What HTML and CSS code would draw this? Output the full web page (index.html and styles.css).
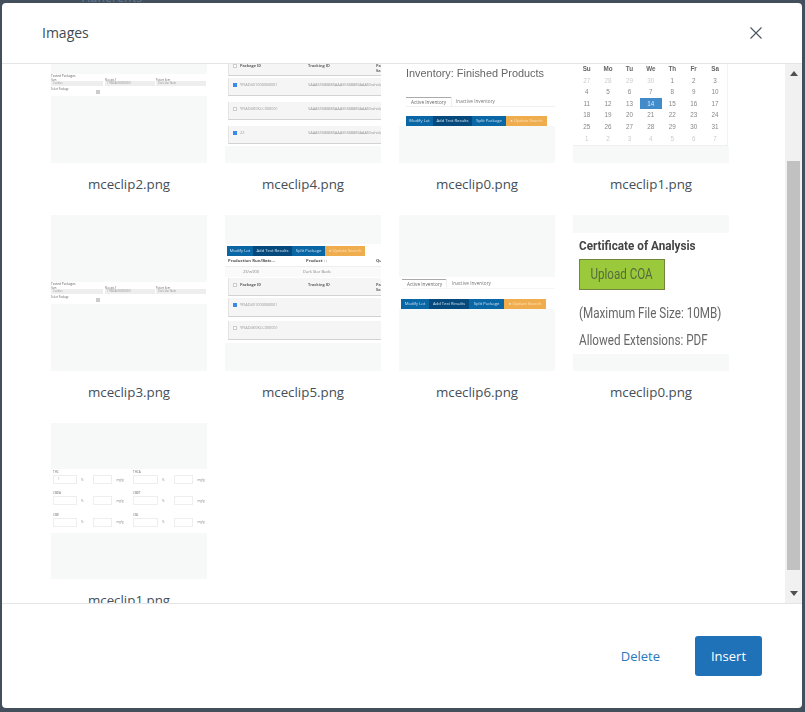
FILE: index.html
```html
<!DOCTYPE html>
<html lang="en">
<head>
<meta charset="utf-8">
<title>Images</title>
<link rel="stylesheet" href="styles.css">
</head>
<body>
<div class="backdrop-text">Adherents</div>
<div class="modal">
  <header class="head">
    <h1 class="title">Images</h1>
    <button class="close" aria-label="Close">
      <svg width="14" height="14" viewBox="0 0 14 14"><path d="M1.5 1.5 12.5 12.5M12.5 1.5 1.5 12.5" fill="none" stroke="#4a5560" stroke-width="1.1"/></svg>
    </button>
  </header>
  <div class="body">
    <div class="scroller">
      <div class="grid">

        <figure class="item">
          <div class="thumb">
            <div class="fill h67"></div>
            <div class="band form-band">
              <div class="mini-title">Tested Packages</div>
              <div class="form-row">
                <div><span>Item</span><i>Cookies</i></div>
                <div><span>Receipt #</span><i>1YFADA0000000001</i></div>
                <div><span>Potent Item</span><i>Dark Star Buds</i></div>
              </div>
              <div class="form-select"><span>Select Package</span><i><b></b></i></div>
            </div>
            <div class="fill grow"></div>
          </div>
          <figcaption>mceclip2.png</figcaption>
        </figure>

        <figure class="item">
          <div class="thumb white">
            <div class="cards cards-top">
              <div class="card head-card"><u></u><b>Package ID</b><b>Tracking ID</b><b class="last">Pa<br>Sa</b></div>
              <div class="card"><u class="on"></u><span>YFIAD4010000B0001</span><span class="long">5AAAS5S8888SAAAS5S8888SAAAS5whisky</span></div>
              <div class="card"><u></u><span>YFIAD4K0KCC000001</span><span class="long">5AAAS5S8888SAAAS5S8888SAAAS5whisky</span></div>
              <div class="card"><u class="on"></u><span>22</span><span class="long">5AAAS5S8888SAAAS5S8888SAAAS5whisky</span></div>
            </div>
            <div class="fill grow"></div>
          </div>
          <figcaption>mceclip4.png</figcaption>
        </figure>

        <figure class="item">
          <div class="thumb white">
            <div class="spacer59"></div>
            <div class="inv-title">Inventory: Finished Products</div>
            <div class="tabs tabs-a"><span class="active">Active Inventory</span><span>Inactive Inventory</span></div>
            <div class="btns btns-a"><span class="b1">Modify Lot</span><span class="b2">Add Test Results</span><span class="b1">Split Package</span><span class="b3">&#9679; Update Search</span></div>
            <div class="fill grow"></div>
          </div>
          <figcaption>mceclip0.png</figcaption>
        </figure>

        <figure class="item">
          <div class="thumb white">
            <div class="spacer56"></div>
            <div class="cal">
              <b>Su</b><b>Mo</b><b>Tu</b><b>We</b><b>Th</b><b>Fr</b><b>Sa</b>
              <s>27</s><s>28</s><s>29</s><s>30</s><span>1</span><span>2</span><span>3</span>
              <span>4</span><span>5</span><span>6</span><span>7</span><span>8</span><span>9</span><span>10</span>
              <span>11</span><span>12</span><span>13</span><em>14</em><span>15</span><span>16</span><span>17</span>
              <span>18</span><span>19</span><span>20</span><span>21</span><span>22</span><span>23</span><span>24</span>
              <span>25</span><span>26</span><span>27</span><span>28</span><span>29</span><span>30</span><span>31</span>
              <s>1</s><s>2</s><s>3</s><s>4</s><s>5</s><s>6</s><s>7</s>
            </div>
            <div class="fill grow"></div>
          </div>
          <figcaption>mceclip1.png</figcaption>
        </figure>

        <figure class="item">
          <div class="thumb">
            <div class="fill h67"></div>
            <div class="band form-band">
              <div class="mini-title">Tested Packages</div>
              <div class="form-row">
                <div><span>Item</span><i>Cookies</i></div>
                <div><span>Receipt #</span><i>1YFADA0000000001</i></div>
                <div><span>Potent Item</span><i>Dark Star Buds</i></div>
              </div>
              <div class="form-select"><span>Select Package</span><i><b></b></i></div>
            </div>
            <div class="fill grow"></div>
          </div>
          <figcaption>mceclip3.png</figcaption>
        </figure>

        <figure class="item">
          <div class="thumb white">
            <div class="fill h29"></div>
            <div class="btns btns-e"><span class="b1">Modify Lot</span><span class="b2">Add Test Results</span><span class="b1">Split Package</span><span class="b3">&#9679; Update Search</span></div>
            <div class="prod-head"><b>Production Run/Batc...</b><b>Product ↑↓</b><b>Qu</b></div>
            <div class="prod-row"><span>23/w900</span><span>Dark Star Buds</span></div>
            <div class="cards cards-low">
              <div class="card head-card"><u></u><b>Package ID</b><b>Tracking ID</b><b class="last">Pa<br>Sa</b></div>
              <div class="card"><u class="on"></u><span>YFIAD4010000B0001</span></div>
              <div class="card"><u></u><span>YFIAD4K0KCC000001</span></div>
            </div>
            <div class="fill grow"></div>
          </div>
          <figcaption>mceclip5.png</figcaption>
        </figure>

        <figure class="item">
          <div class="thumb">
            <div class="fill h62"></div>
            <div class="band inv-band">
              <div class="tabs tabs-b"><span class="active">Active Inventory</span><span>Inactive Inventory</span></div>
              <div class="btns btns-b"><span class="b1">Modify Lot</span><span class="b2">Add Test Results</span><span class="b1">Split Package</span><span class="b3">&#9679; Update Search</span></div>
            </div>
            <div class="fill grow"></div>
          </div>
          <figcaption>mceclip6.png</figcaption>
        </figure>

        <figure class="item">
          <div class="thumb">
            <div class="fill h18"></div>
            <div class="band coa">
              <div class="coa-title">Certificate of Analysis</div>
              <div class="coa-btn"><span>Upload COA</span></div>
              <div class="coa-line first">(Maximum File Size: 10MB)</div>
              <div class="coa-line">Allowed Extensions: PDF</div>
            </div>
            <div class="fill grow"></div>
          </div>
          <figcaption>mceclip0.png</figcaption>
        </figure>

        <figure class="item">
          <div class="thumb">
            <div class="fill h46"></div>
            <div class="band test-band">
              <div class="test-grid">
                <div><label>THC</label><p><i class="w24">1</i><span>%</span><i class="w19"></i><span>mg/g</span></p></div>
                <div><label>THCA</label><p><i class="w25"></i><span>%</span><i class="w19"></i><span>mg/g</span></p></div>
                <div><label>CBDA</label><p><i class="w24"></i><span>%</span><i class="w19"></i><span>mg/g</span></p></div>
                <div><label>CBDT</label><p><i class="w25"></i><span>%</span><i class="w19"></i><span>mg/g</span></p></div>
                <div><label>CBD</label><p><i class="w24"></i><span>%</span><i class="w19"></i><span>mg/g</span></p></div>
                <div><label>CBL</label><p><i class="w25"></i><span>%</span><i class="w19"></i><span>mg/g</span></p></div>
              </div>
            </div>
            <div class="fill grow"></div>
          </div>
          <figcaption>mceclip1.png</figcaption>
        </figure>

      </div>
    </div>
    <div class="scrollbar">
      <svg class="arrow" width="8" height="5" viewBox="0 0 8 5"><path d="M4 0 8 5H0Z" fill="#505050"/></svg>
      <div class="track"><div class="bar"></div></div>
      <svg class="arrow" width="8" height="5" viewBox="0 0 8 5"><path d="M0 0H8L4 5Z" fill="#505050"/></svg>
    </div>
  </div>
  <footer class="foot">
    <button class="link">Delete</button>
    <button class="primary">Insert</button>
  </footer>
</div>
</body>
</html>
```
FILE: styles.css
```css
* { box-sizing: border-box; }
html, body { height: 100%; }
body {
  margin: 0;
  padding: 3px 3px 4px 2px;
  background: #434f5a;
  overflow: hidden;
  font-family: "Open Sans", sans-serif;
  position: relative;
}
.backdrop-text {
  position: absolute;
  left: 82px;
  top: -9px;
  font-size: 12px;
  font-weight: 600;
  line-height: 14px;
  color: #58728c;
}
.modal {
  position: relative;
  height: 705px;
  background: #fff;
  border-radius: 4px;
  display: flex;
  flex-direction: column;
  overflow: hidden;
}
.head {
  height: 61px;
  flex: none;
  border-bottom: 1px solid #e3e5e6;
  display: flex;
  align-items: center;
  justify-content: space-between;
  padding: 0 39px 0 40px;
}
.title {
  margin: 0 0 2px;
  font-size: 14px;
  font-weight: 400;
  color: #3f4a54;
}
.close {
  border: 0;
  background: none;
  padding: 0;
  width: 14px;
  height: 14px;
  display: block;
}
.close svg { display: block; }
.body {
  flex: 1;
  min-height: 0;
  display: flex;
}
.scroller {
  flex: 1;
  overflow: hidden;
}
.grid {
  margin-top: -57px;
  padding-left: 49px;
  display: grid;
  grid-template-columns: repeat(4, 156px);
  grid-auto-rows: 208px;
  column-gap: 18px;
  align-content: start;
}
.item { margin: 0; }
figcaption {
  margin-top: 12px;
  text-align: center;
  font-size: 13.33px;
  line-height: 19px;
  color: #444f59;
}
.thumb {
  width: 156px;
  height: 156px;
  background: #f7f8f8;
  overflow: hidden;
  display: flex;
  flex-direction: column;
  color: #777;
  filter: blur(.4px);
}
.thumb.white { background: #fff; }
.fill { background: #f7f8f8; flex: none; }
.fill.grow { flex: 1; }
.h18 { height: 18px; }
.h29 { height: 29px; }
.h46 { height: 46px; }
.h62 { height: 62px; }
.h67 { height: 67px; }
.spacer56 { height: 56px; flex: none; }
.spacer59 { height: 59px; flex: none; }
.band { background: #fff; flex: none; }

/* tested-packages form */
.form-band { height: 22px; font-size: 2.6px; line-height: 2.5px; }
.mini-title { font-size: 3.2px; line-height: 4px; height: 4.5px; color: #666; }
.form-row { display: grid; grid-template-columns: 54px 51px 50px; }
.form-row span, .form-select span { display: block; height: 2.5px; color: #666; }
.form-row i {
  display: block;
  height: 5px;
  width: 50px;
  background: #eee;
  font-style: normal;
  padding-left: 2px;
  line-height: 5px;
  color: #999;
}
.form-row div:first-child i { width: 52px; }
.form-select { margin-top: 1.5px; }
.form-select i { display: flex; justify-content: flex-end; width: 49px; height: 5px; }
.form-select b { width: 4px; height: 4px; background: #ccc; display: block; }

/* package cards */
.cards { padding-left: 3px; flex: none; display: flex; flex-direction: column; }
.cards-top { height: 139px; padding-top: 52px; gap: 6px; }
.cards-top .head-card { height: 17px; margin-bottom: -4px; }
.cards-low { height: 65px; margin-top: 1px; gap: 4px; }
.cards-low .card { height: 19px; }
.cards-low .head-card { height: 18px; margin-bottom: -2px; }
.card {
  width: 156px;
  height: 18px;
  flex: none;
  background: #f5f5f5;
  border-bottom: 1px solid #d2d2d2;
  border-left: 1px solid #e3e3e3;
  display: flex;
  align-items: flex-start;
  font-size: 3.9px;
  line-height: 5px;
  color: #999;
  padding-top: 3.5px;
  overflow: hidden;
  white-space: nowrap;
}
.card u {
  width: 4px;
  height: 4px;
  margin: 1px 0 0 4px;
  border: .5px solid #ccc;
  background: #fff;
  flex: none;
}
.card u.on { background: #3b8ae6; border-color: #3b8ae6; }
.card span, .card b { display: block; width: 71px; padding-left: 3px; flex: none; }
.card b { color: #666; }
.card b + b { width: 68px; padding-left: 0; }
.card span.long { width: 80px; padding-left: 0; font-size: 3.95px; letter-spacing: -.05px; }
.card b.last { width: 10px; }

/* inventory */
.inv-title {
  font-family: "Liberation Sans", sans-serif;
  font-size: 10.9px;
  line-height: 14px;
  height: 31px;
  padding-left: 7px;
  white-space: nowrap;
  color: #666;
  flex: none;
}
.tabs {
  display: flex;
  font-size: 4.7px;
  line-height: 9px;
  height: 10px;
  color: #777;
  flex: none;
}
.tabs span { padding: 0 5px; white-space: nowrap; }
.tabs .active { border-top: 1px solid #aaa; box-shadow: 1px 0 0 #eee; line-height: 9px; color: #666; }
.tabs-a { margin-left: 7px; border-bottom: 1px solid #f0f0f0; margin-bottom: 9px; }
.tabs-b { margin: 2px 0 10px 3px; border-bottom: 1px solid #f6f6f6; }
.tabs-b .active { padding: 0 4px 0 5px; }
.tabs-b span + span { padding-left: 6px; }
.btns {
  display: grid;
  height: 10px;
  flex: none;
  font-size: 4.2px;
  line-height: 10px;
  color: #cfe0ee;
  white-space: nowrap;
  text-align: center;
}
.btns span { overflow: hidden; }
.btns .b1 { background: #0a67a6; }
.btns .b2 { background: #064a7d; }
.btns .b3 { background: #f0ad4e; color: #fbe3bd; }
.btns-a { margin-left: 7px; grid-template-columns: 27px 39px 34px 41px; }
.btns-b { margin-left: 2px; grid-template-columns: 28px 40px 35px 42px; }
.btns-e { margin: 2px 0 0 2px; grid-template-columns: 26px 39px 33px 40px; }

/* production header */
.prod-head, .prod-row {
  display: grid;
  padding-left: 3px;
  white-space: nowrap;
  flex: none;
  overflow: hidden;
}
.prod-head { grid-template-columns: 78px 70px 10px; font-size: 4.2px; line-height: 10px; height: 11px; color: #555; border-bottom: 1px solid #eee; }
.prod-row { grid-template-columns: 75px 60px; font-size: 4px; line-height: 9px; height: 10px; color: #888; background: #fafafa; }
.prod-row span:first-child { padding-left: 15px; }

/* calendar */
.cal {
  width: 155px;
  height: 83px;
  flex: none;
  display: grid;
  grid-template-columns: repeat(7, 21.4px);
  grid-auto-rows: 11.6px;
  padding-left: 3px;
  font-family: "Liberation Sans", sans-serif;
  font-size: 6.3px;
  line-height: 11.6px;
  text-align: center;
  color: #888;
  border-bottom: 1px solid #efefef;
  border-right: 1px solid #f3f3f3;
}
.cal b { color: #666; }
.cal s { text-decoration: none; color: #ccc; }
.cal em { font-style: normal; background: #428bca; color: #dbe8f4; }

/* certificate */
.coa { height: 121px; padding: 4px 0 0 6px; font-family: Roboto, sans-serif; }
.coa-title { font-size: 13px; line-height: 17px; font-weight: 700; color: #444; white-space: nowrap; transform-origin: left; transform: scaleX(.9); }
.coa-btn {
  width: 86px;
  height: 31px;
  margin-top: 5px;
  background: #9aca3c;
  border: 1px solid #72853f;
  color: #566b3b;
  font-size: 14px;
  line-height: 29px;
  text-align: center;
  white-space: nowrap;
}
.coa-btn span { display: inline-block; transform: scaleX(.83); }
.coa-line {
  font-size: 14px;
  line-height: 17px;
  color: #666;
  white-space: nowrap;
  margin-top: 10px;
  transform-origin: left;
  transform: scaleX(.835);
}
.coa-line.first { margin-top: 15px; }

/* test results */
.test-band { height: 64px; }
.test-grid {
  display: grid;
  grid-template-columns: 80px 76px;
  grid-auto-rows: 21.3px;
  padding: 1px 0 0 2px;
  font-size: 3px;
  line-height: 4px;
  color: #888;
}
.test-grid label { display: block; height: 5px; color: #666; }
.test-grid p { margin: 0; display: flex; align-items: center; gap: 4px; height: 9px; }
.test-grid i {
  display: block;
  height: 9px;
  border: 1px solid #eee;
  font-style: normal;
  padding-left: 4px;
  line-height: 7px;
  flex: none;
}
.w24 { width: 24px; }
.w25 { width: 25px; }
.w19 { width: 19px; margin-left: 6px; }

/* scrollbar */
.scrollbar {
  width: 17px;
  flex: none;
  background: #f1f1f1;
  display: flex;
  flex-direction: column;
  align-items: center;
  padding: 7px 0;
}
.arrow { display: block; flex: none; }
.track {
  flex: 1;
  width: 100%;
  margin: 6px 0 4px;
  padding-top: 79px;
  padding-bottom: 17px;
  display: flex;
}
.bar { flex: 1; margin: 0 2px; background: #c1c1c1; }

/* footer */
.foot {
  height: 105px;
  flex: none;
  border-top: 1px solid #e3e5e6;
  display: flex;
  align-items: center;
  justify-content: flex-end;
  padding-right: 40px;
}
.link, .primary {
  font-family: "Open Sans", sans-serif;
  font-size: 13px;
  border: 0;
  padding: 0;
}
.link { background: none; color: #2b78bb; margin-right: 35px; }
.primary {
  width: 67px;
  height: 40px;
  background: #1f72b8;
  color: #fff;
  border-radius: 3px;
  font-weight: 500;
}
```
